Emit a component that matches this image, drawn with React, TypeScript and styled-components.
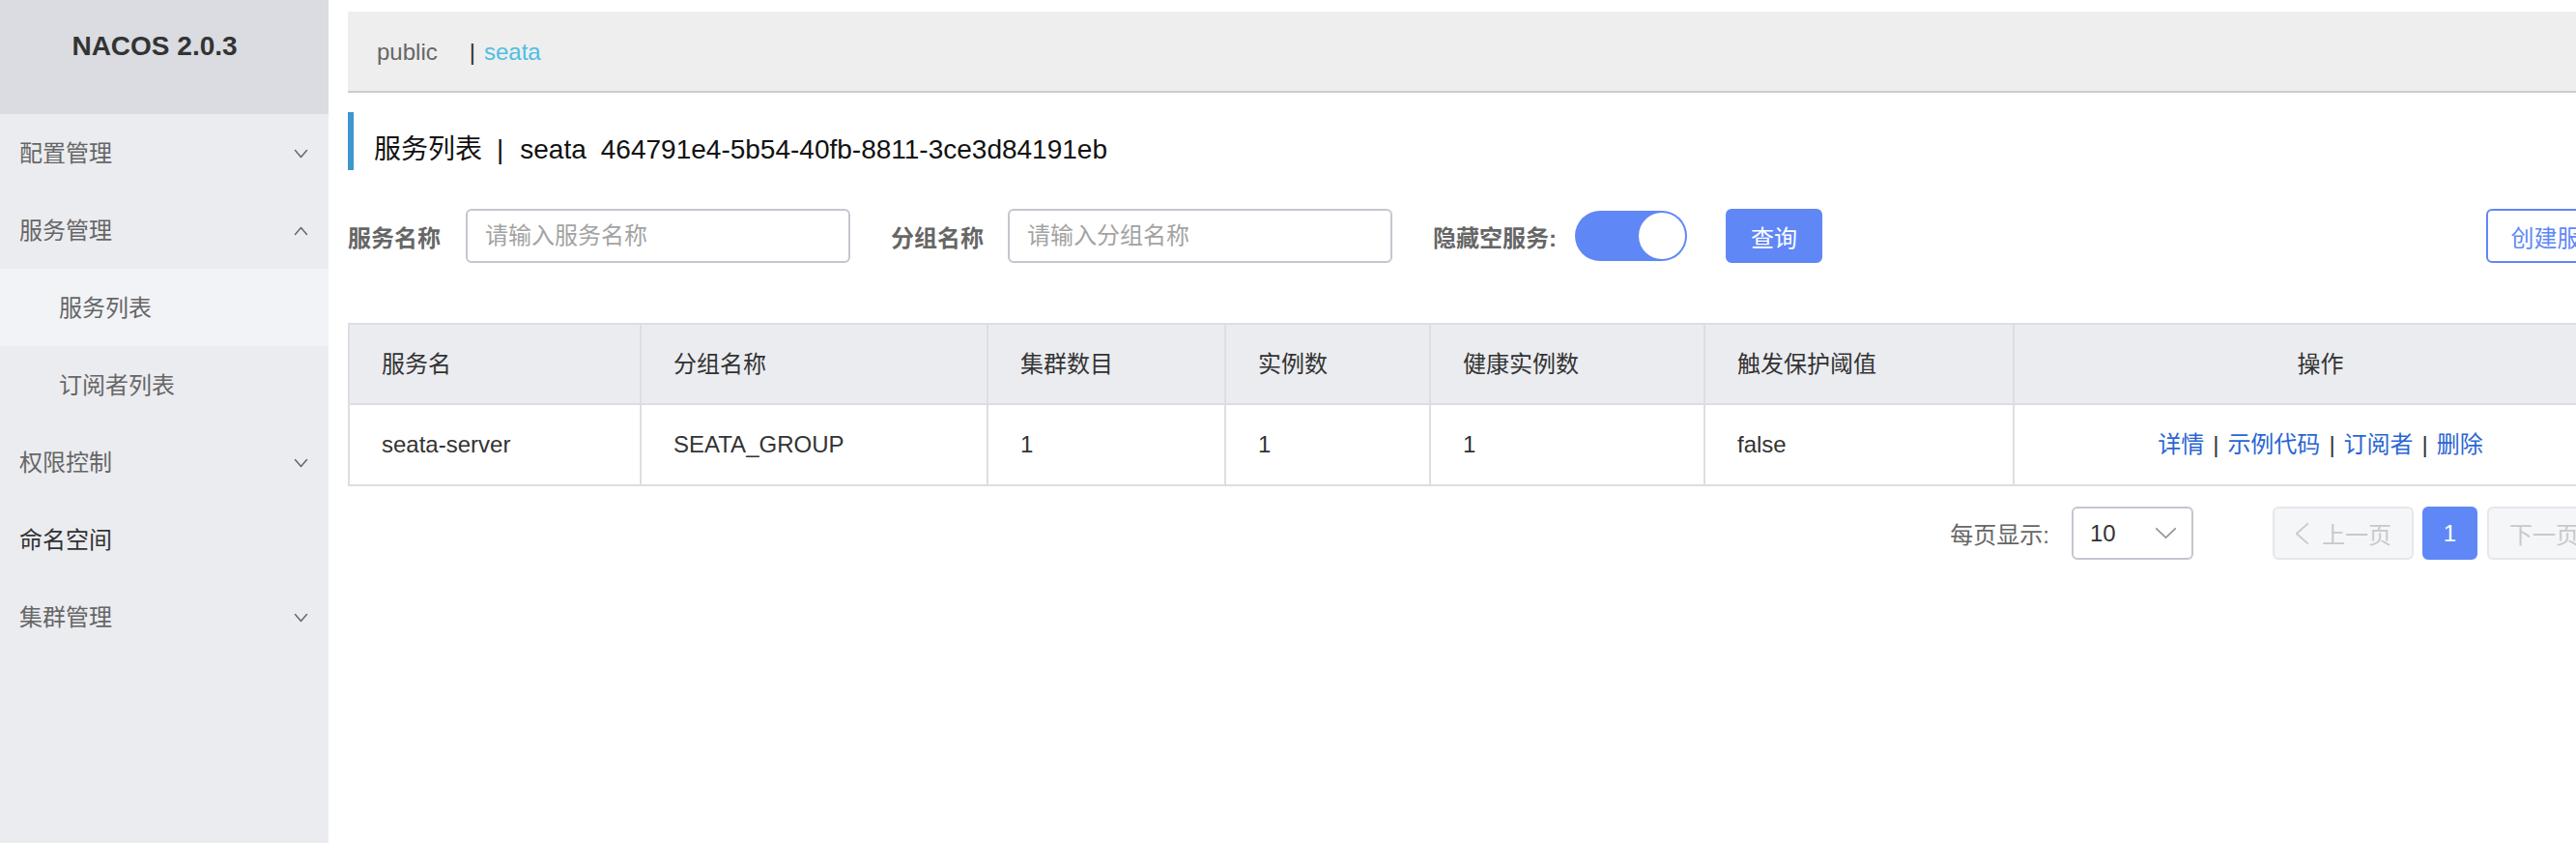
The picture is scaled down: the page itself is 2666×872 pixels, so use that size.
import React from 'react';
import styled, { createGlobalStyle } from 'styled-components';

const GlobalStyle = createGlobalStyle`
  html, body { margin: 0; padding: 0; overflow: hidden; background: #fff; }
  body { font-family: "Liberation Sans", "Noto Sans CJK SC", sans-serif; }
  * { box-sizing: border-box; }
`;

const BLUE = '#6087f6';

const Layout = styled.div`
  display: flex;
  width: 2666px;
  height: 872px;
  overflow: hidden;
`;

const Sidebar = styled.aside`
  flex: 0 0 340px;
  height: 100%;
  background: #ebecf0;
`;

const Brand = styled.div`
  height: 118px;
  background: #dadce1;
  padding: 34px 20px 0 0;
  text-align: center;
  font-size: 28px;
  line-height: 28px;
  font-weight: bold;
  color: #333;
`;

const MenuItem = styled.div<{ $sub?: boolean; $active?: boolean; $strong?: boolean }>`
  height: 80px;
  display: flex;
  align-items: center;
  justify-content: space-between;
  padding: 2px 21px 0 ${(p) => (p.$sub ? 61 : 20)}px;
  font-size: 24px;
  line-height: 1;
  color: ${(p) => (p.$strong ? '#333' : '#666')};
  background: ${(p) => (p.$active ? '#f2f3f7' : 'transparent')};
`;

const Main = styled.main`
  flex: 0 0 auto;
  padding: 12px 20px 0;
`;

const Content = styled.div`
  width: 2360px;
  display: flex;
  flex-direction: column;
`;

const TopBar = styled.div`
  height: 84px;
  background: #eeeeee;
  border-bottom: 2px solid #cccccc;
  display: flex;
  align-items: center;
  padding: 2px 0 0 30px;
  font-size: 24px;
  line-height: 1;
`;

const Crumb = styled.span<{ $current?: boolean }>`
  color: ${(p) => (p.$current ? '#4dbfe0' : '#666')};
`;

const CrumbSep = styled.span`
  color: #333;
  margin: 0 9px 0 33px;
`;

const TitleBlock = styled.div`
  margin-top: 20px;
  height: 60px;
  border-left: 6px solid #3d96cd;
  padding: 0 0 7px 21px;
  display: flex;
  align-items: flex-end;
  font-size: 28px;
  line-height: 28px;
  color: #111;
`;

const TitleSep = styled.span`
  margin: 0 17px 0 15px;
`;

const TitleId = styled.span`
  margin-left: 15px;
`;

const SearchRow = styled.div`
  margin-top: 40px;
  height: 56px;
  display: flex;
  align-items: center;
`;

const FieldLabel = styled.span<{ $gap: number }>`
  font-size: 24px;
  font-weight: bold;
  color: #666;
  margin-right: ${(p) => p.$gap}px;
  white-space: nowrap;
`;

const TextInput = styled.input`
  width: 398px;
  height: 56px;
  border: 2px solid #c4c6cf;
  border-radius: 6px;
  padding: 0 18px;
  font-size: 24px;
  font-family: inherit;
  color: #333;
  margin-right: 42px;
  outline: none;
  &::placeholder { color: #a3a3a3; }
`;

const Toggle = styled.div`
  width: 116px;
  height: 52px;
  border-radius: 26px;
  background: ${BLUE};
  display: flex;
  align-items: center;
  justify-content: flex-end;
  padding-right: 2px;
  margin-right: 40px;
`;

const Knob = styled.div`
  width: 48px;
  height: 48px;
  border-radius: 50%;
  background: #fff;
`;

const Button = styled.button<{ $outline?: boolean; $width: number }>`
  width: ${(p) => p.$width}px;
  height: 56px;
  border-radius: 6px;
  border: 2px solid ${BLUE};
  background: ${(p) => (p.$outline ? '#fff' : BLUE)};
  color: ${(p) => (p.$outline ? BLUE : '#fff')};
  font-size: 24px;
  font-family: inherit;
  padding: 0;
  flex: 0 0 auto;
`;

const Spacer = styled.div`
  flex: 1;
`;

const Table = styled.table`
  margin-top: 62px;
  width: 2360px;
  table-layout: fixed;
  border-collapse: separate;
  border-spacing: 0;
  border-top: 2px solid #dcdee3;
  border-left: 2px solid #dcdee3;
  font-size: 24px;
  color: #333;
`;

const Th = styled.th<{ $center?: boolean }>`
  height: 83px;
  background: #ebecf0;
  font-weight: normal;
  text-align: ${(p) => (p.$center ? 'center' : 'left')};
  padding: 0 0 0 ${(p) => (p.$center ? 0 : 33)}px;
  border-right: 2px solid #dcdee3;
  border-bottom: 2px solid #dcdee3;
  line-height: 1;
`;

const Td = styled.td<{ $center?: boolean }>`
  height: 84px;
  text-align: ${(p) => (p.$center ? 'center' : 'left')};
  padding: 0 0 0 ${(p) => (p.$center ? 0 : 33)}px;
  border-right: 2px solid #dcdee3;
  border-bottom: 2px solid #dcdee3;
  line-height: 1;
`;

const OpLink = styled.a`
  color: #2a65d3;
  text-decoration: none;
`;

const OpSep = styled.span`
  color: #333;
  margin: 0 9px;
`;

const Pager = styled.div`
  margin-top: 21px;
  height: 55px;
  display: flex;
  justify-content: flex-end;
  align-items: center;
  font-size: 24px;
`;

const PagerLabel = styled.span`
  color: #666;
  margin-right: 23px;
`;

const SelectBox = styled.div`
  width: 126px;
  height: 55px;
  border: 2px solid #c4c6cf;
  border-radius: 6px;
  display: flex;
  align-items: center;
  justify-content: space-between;
  padding: 0 15px 0 17px;
  color: #333;
  margin-right: 82px;
`;

const PageBtn = styled.div<{ $active?: boolean; $width: number; $gap: number }>`
  width: ${(p) => p.$width}px;
  height: 55px;
  border-radius: 6px;
  border: 2px solid ${(p) => (p.$active ? BLUE : '#e6e7eb')};
  background: ${(p) => (p.$active ? BLUE : '#f5f6f8')};
  color: ${(p) => (p.$active ? '#fff' : '#c8c9cc')};
  display: flex;
  align-items: center;
  justify-content: center;
  gap: 13px;
  margin-right: ${(p) => p.$gap}px;
  flex: 0 0 auto;
`;

const Chevron: React.FC<{ dir: 'up' | 'down' | 'left' | 'right'; w: number; h: number; color: string; sw?: number }> = ({
  dir,
  w,
  h,
  color,
  sw = 1.5,
}) => {
  const m = sw;
  let d = '';
  if (dir === 'down') d = `M${m} ${m} L${w / 2} ${h - m} L${w - m} ${m}`;
  if (dir === 'up') d = `M${m} ${h - m} L${w / 2} ${m} L${w - m} ${h - m}`;
  if (dir === 'left') d = `M${w - m} ${m} L${m} ${h / 2} L${w - m} ${h - m}`;
  if (dir === 'right') d = `M${m} ${m} L${w - m} ${h / 2} L${m} ${h - m}`;
  return (
    <svg width={w} height={h} viewBox={`0 0 ${w} ${h}`} fill="none">
      <path d={d} stroke={color} strokeWidth={sw} strokeLinecap="round" strokeLinejoin="round" />
    </svg>
  );
};

const menu = [
  { label: '配置管理', arrow: 'down' as const },
  { label: '服务管理', arrow: 'up' as const },
  { label: '服务列表', sub: true, active: true },
  { label: '订阅者列表', sub: true },
  { label: '权限控制', arrow: 'down' as const },
  { label: '命名空间', strong: true },
  { label: '集群管理', arrow: 'down' as const },
];

const columns = [
  { title: '服务名', width: 302 },
  { title: '分组名称', width: 359 },
  { title: '集群数目', width: 246 },
  { title: '实例数', width: 212 },
  { title: '健康实例数', width: 284 },
  { title: '触发保护阈值', width: 320 },
  { title: '操作', width: 635, center: true },
];

const row = ['seata-server', 'SEATA_GROUP', '1', '1', '1', 'false'];
const ops = ['详情', '示例代码', '订阅者', '删除'];

export default function App() {
  return (
    <>
      <GlobalStyle />
      <Layout>
        <Sidebar>
          <Brand>NACOS 2.0.3</Brand>
          {menu.map((m) => (
            <MenuItem key={m.label} $sub={m.sub} $active={m.active} $strong={m.strong}>
              <span>{m.label}</span>
              {m.arrow && <Chevron dir={m.arrow} w={15} h={10} color="#666" />}
            </MenuItem>
          ))}
        </Sidebar>
        <Main>
          <Content>
            <TopBar>
              <Crumb>public</Crumb>
              <CrumbSep>|</CrumbSep>
              <Crumb $current>seata</Crumb>
            </TopBar>
            <TitleBlock>
              <span>服务列表</span>
              <TitleSep>|</TitleSep>
              <span>seata</span>
              <TitleId>464791e4-5b54-40fb-8811-3ce3d84191eb</TitleId>
            </TitleBlock>
            <SearchRow>
              <FieldLabel $gap={26}>服务名称</FieldLabel>
              <TextInput placeholder="请输入服务名称" />
              <FieldLabel $gap={25}>分组名称</FieldLabel>
              <TextInput placeholder="请输入分组名称" />
              <FieldLabel $gap={19}>隐藏空服务:</FieldLabel>
              <Toggle>
                <Knob />
              </Toggle>
              <Button $width={100}>查询</Button>
              <Spacer />
              <Button $outline $width={147}>创建服务</Button>
            </SearchRow>
            <Table>
              <colgroup>
                {columns.map((c) => (
                  <col key={c.title} style={{ width: c.width }} />
                ))}
              </colgroup>
              <thead>
                <tr>
                  {columns.map((c) => (
                    <Th key={c.title} $center={c.center}>
                      {c.title}
                    </Th>
                  ))}
                </tr>
              </thead>
              <tbody>
                <tr>
                  {row.map((v, i) => (
                    <Td key={i}>{v}</Td>
                  ))}
                  <Td $center>
                    {ops.map((o, i) => (
                      <React.Fragment key={o}>
                        {i > 0 && <OpSep>|</OpSep>}
                        <OpLink href="#">{o}</OpLink>
                      </React.Fragment>
                    ))}
                  </Td>
                </tr>
              </tbody>
            </Table>
            <Pager>
              <PagerLabel>每页显示:</PagerLabel>
              <SelectBox>
                <span>10</span>
                <Chevron dir="down" w={23} h={13} color="#999" sw={1.8} />
              </SelectBox>
              <PageBtn $width={146} $gap={9}>
                <Chevron dir="left" w={15} h={24} color="#c8c9cc" sw={1.8} />
                <span>上一页</span>
              </PageBtn>
              <PageBtn $active $width={57} $gap={10}>
                1
              </PageBtn>
              <PageBtn $width={146} $gap={0}>
                <span>下一页</span>
                <Chevron dir="right" w={15} h={24} color="#c8c9cc" sw={1.8} />
              </PageBtn>
            </Pager>
          </Content>
        </Main>
      </Layout>
    </>
  );
}
